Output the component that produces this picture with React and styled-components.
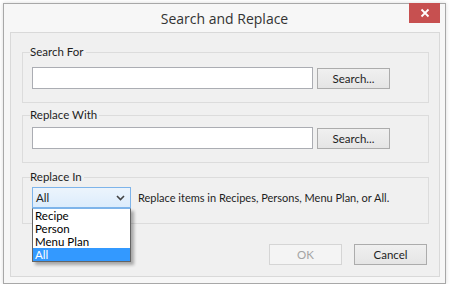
import React from "react";
import styled, { createGlobalStyle } from "styled-components";

const GlobalStyle = createGlobalStyle`
  html, body {
    margin: 0;
    padding: 0;
    background: #ffffff;
    font-family: Lato, "Noto Sans", sans-serif;
  }
`;

const Window = styled.div`
  margin: 3px 0 0 3px;
  width: 443px;
  height: 281px;
  box-sizing: border-box;
  border: 1px solid #a8a8a8;
  background: #f7f7f7;
  display: flex;
  flex-direction: column;
  box-shadow: 0 0 4px rgba(0, 0, 0, 0.15);
`;

const TitleBar = styled.div`
  height: 28px;
  display: grid;
  grid-template-columns: 1fr auto 1fr;
  align-items: start;
`;

const Title = styled.div`
  grid-column: 2;
  font-family: "Open Sans", sans-serif;
  font-size: 14px;
  color: #333;
  line-height: 28px;
  padding-top: 1px;
`;

const CloseButton = styled.div`
  grid-column: 3;
  justify-self: end;
  margin: -1px 5px 0 0;
  width: 31px;
  height: 20px;
  background: #c75050;
  color: #fff;
  display: flex;
  align-items: center;
  justify-content: center;
`;

const Panel = styled.div`
  margin: 0 5px 6px 6px;
  flex: 1;
  border: 1px solid #d9d9d9;
  background: #f0f0f0;
  padding: 11px 10px 0 11px;
  display: flex;
  flex-direction: column;
`;

const Group = styled.fieldset`
  margin: ${(p) => p.$mt || 0}px 0 0 0;
  padding: ${(p) => p.$top}px 10px 0 9px;
  height: ${(p) => p.$h}px;
  box-sizing: border-box;
  border: 1px solid #dcdcdc;
  min-width: 0;
`;

const Legend = styled.legend`
  font-size: 11.5px;
  line-height: 16px;
  color: #1e1e1e;
  padding: 0 2px 0 0;
  margin-left: -2px;
`;

const Row = styled.div`
  display: flex;
  align-items: center;
  gap: ${(p) => p.$gap || 4}px;
`;

const TextInput = styled.div`
  width: 281px;
  height: 22px;
  box-sizing: border-box;
  background: #fff;
  border: 1px solid #abadb3;
`;

const Button = styled.div`
  width: 73px;
  height: 21px;
  box-sizing: border-box;
  border: 1px solid ${(p) => (p.$disabled ? "#d5d5d5" : "#acacac")};
  background: ${(p) =>
    p.$disabled ? "#f4f4f4" : "linear-gradient(#f0f0f0, #e5e5e5)"};
  color: ${(p) => (p.$disabled ? "#a3a3a3" : "#1e1e1e")};
  font-size: 11.5px;
  display: flex;
  align-items: center;
  justify-content: center;
`;

const SelectWrap = styled.div`
  position: relative;
  width: 99px;
  flex: none;
`;

const Select = styled.div`
  height: 21px;
  box-sizing: border-box;
  border: 1px solid #7eb4ea;
  background: linear-gradient(#ecf4fc, #dcecfc);
  display: flex;
  align-items: center;
  justify-content: space-between;
  padding: 0 5px 0 3px;
  font-size: 11.5px;
  color: #1e1e1e;
`;

const DropList = styled.div`
  position: absolute;
  top: 21px;
  left: 0;
  width: 99px;
  box-sizing: border-box;
  border: 1px solid #646464;
  border-top-color: #7eb4ea;
  background: #fff;
  box-shadow: 3px 3px 3px rgba(0, 0, 0, 0.3);
  z-index: 2;
`;

const Option = styled.div`
  height: 13px;
  line-height: 13px;
  font-size: 11.5px;
  padding-left: 2px;
  overflow: hidden;
  color: ${(p) => (p.$active ? "#fff" : "#000")};
  background: ${(p) => (p.$active ? "#3399ff" : "transparent")};
`;

const Hint = styled.div`
  font-size: 11px;
  color: #1e1e1e;
  white-space: nowrap;
`;

const Footer = styled.div`
  display: flex;
  justify-content: flex-end;
  gap: 12px;
  margin-top: 20px;
  padding-right: 2px;
`;

const Chevron = () => (
  <svg width="9" height="6" viewBox="0 0 9 6">
    <path d="M1 1 L4.5 4.5 L8 1" fill="none" stroke="#444" strokeWidth="1.6" />
  </svg>
);

const CloseIcon = () => (
  <svg width="10" height="10" viewBox="0 0 10 10">
    <path d="M1.5 1.5 L8.5 8.5 M8.5 1.5 L1.5 8.5" stroke="#fff" strokeWidth="1.8" />
  </svg>
);

const options = ["Recipe", "Person", "Menu Plan", "All"];

export default function App() {
  return (
    <>
      <GlobalStyle />
      <Window>
        <TitleBar>
          <Title>Search and Replace</Title>
          <CloseButton>
            <CloseIcon />
          </CloseButton>
        </TitleBar>
        <Panel>
          <Group $top={7} $h={59}>
            <Legend>Search For</Legend>
            <Row>
              <TextInput />
              <Button>Search...</Button>
            </Row>
          </Group>
          <Group $mt={4} $top={4} $h={56}>
            <Legend>Replace With</Legend>
            <Row>
              <TextInput />
              <Button>Search...</Button>
            </Row>
          </Group>
          <Group $mt={6} $top={2} $h={55}>
            <Legend>Replace In</Legend>
            <Row $gap={7}>
              <SelectWrap>
                <Select>
                  <span>All</span>
                  <Chevron />
                </Select>
                <DropList>
                  {options.map((o) => (
                    <Option key={o} $active={o === "All"}>
                      {o}
                    </Option>
                  ))}
                </DropList>
              </SelectWrap>
              <Hint>Replace items in Recipes, Persons, Menu Plan, or All.</Hint>
            </Row>
          </Group>
          <Footer>
            <Button $disabled>OK</Button>
            <Button>Cancel</Button>
          </Footer>
        </Panel>
      </Window>
    </>
  );
}
